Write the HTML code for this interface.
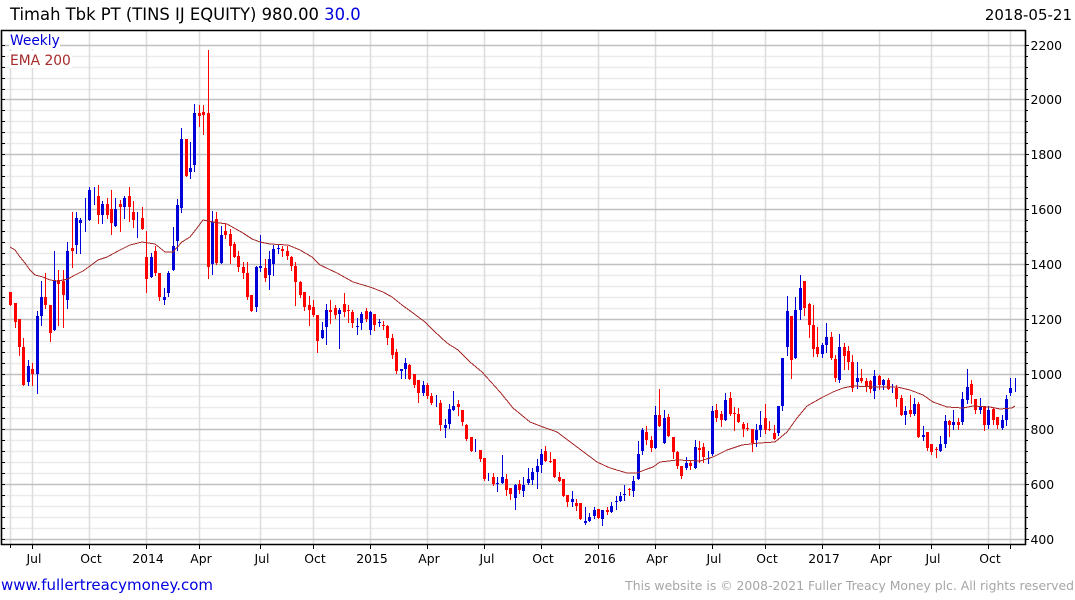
<!DOCTYPE html>
<html><head><meta charset="utf-8"><title>Timah Tbk PT</title>
<style>
html,body{margin:0;padding:0;background:#fff;width:1075px;height:600px;overflow:hidden}
svg{display:block}
text{font-family:"DejaVu Sans","Liberation Sans",sans-serif}
</style></head><body>
<svg width="1075" height="600" viewBox="0 0 1075 600" xmlns="http://www.w3.org/2000/svg">
<rect width="1075" height="600" fill="#fff"/>
<!-- minor horizontal grid -->
<path fill="none" stroke="#ebebeb" stroke-width="1.6" d="M3 56.5H1025M3 67.5H1025M3 78.5H1025M3 89.5H1025M3 110.5H1025M3 121.5H1025M3 132.5H1025M3 143.5H1025M3 165.5H1025M3 176.5H1025M3 187.5H1025M3 198.5H1025M3 220.5H1025M3 231.5H1025M3 242.5H1025M3 253.5H1025M3 275.5H1025M3 286.5H1025M3 297.5H1025M3 308.5H1025M3 330.5H1025M3 341.5H1025M3 352.5H1025M3 363.5H1025M3 385.5H1025M3 396.5H1025M3 407.5H1025M3 418.5H1025M3 440.5H1025M3 451.5H1025M3 462.5H1025M3 473.5H1025M3 495.5H1025M3 506.5H1025M3 517.5H1025M3 528.5H1025"/>
<!-- vertical grid -->
<path fill="none" stroke="#dedede" stroke-width="1.6" d="M10.5 31V544M32.5 31V544M89.5 31V544M146.5 31V544M199.5 31V544M260.5 31V544M313.5 31V544M370.5 31V544M427.5 31V544M484.5 31V544M541.5 31V544M598.5 31V544M655.5 31V544M712.5 31V544M765.5 31V544M822.5 31V544M879.5 31V544M931.5 31V544M988.5 31V544M1010.5 31V544"/>
<!-- major horizontal grid -->
<path fill="none" stroke="#c0c0c0" stroke-width="1.6" d="M3 45.5H1025M3 99.5H1025M3 154.5H1025M3 209.5H1025M3 264.5H1025M3 319.5H1025M3 374.5H1025M3 429.5H1025M3 484.5H1025M3 539.5H1025"/>

<!-- red wicks -->
<path fill="none" stroke="#f00" stroke-width="1" d="M10.5 292V306M15.5 303V328M19.5 319V356M23.5 338V386M32.5 363V386M45.5 273V309M50.5 305V342M58.5 270V326M63.5 270V328M72.5 212V268M98.5 185V224M107.5 198V219M111.5 190V235M120.5 200V232M129.5 187V222M133.5 201V228M142.5 207V230M146.5 231V293M155.5 246V276M159.5 273V301M186.5 139V177M199.5 105V127M203.5 105V135M208.5 50V279M216.5 212V265M225.5 223V239M230.5 229V264M234.5 242V258M238.5 251V272M243.5 262V279M247.5 262V300M251.5 295V312M265.5 259V282M282.5 246V257M287.5 246V260M291.5 256V271M295.5 262V306M300.5 281V298M304.5 292V311M309.5 296V326M313.5 300V317M317.5 315V353M330.5 300V324M335.5 305V319M344.5 293V317M348.5 305V323M352.5 310V328M366.5 308V322M374.5 314V331M383.5 321V330M387.5 325V345M392.5 334V359M396.5 349V374M409.5 364V380M414.5 374V388M418.5 380V403M427.5 383V399M431.5 393V405M440.5 400V431M458.5 400V416M462.5 410V426M466.5 424V441M471.5 437V452M480.5 450V462M484.5 458V481M493.5 473V486M506.5 474V496M510.5 488V500M519.5 480V494M545.5 446V462M550.5 452V463M554.5 459V478M559.5 472V482M563.5 479V497M567.5 495V507M576.5 499V511M580.5 503V520M598.5 509V519M607.5 507V515M629.5 488V496M646.5 426V445M651.5 436V452M659.5 389V427M668.5 414V437M673.5 437V459M677.5 451V469M681.5 466V479M690.5 461V470M699.5 441V463M703.5 443V463M716.5 404V422M721.5 411V427M730.5 392V416M734.5 407V431M738.5 408V423M743.5 422V437M747.5 423V431M752.5 429V452M765.5 404V434M769.5 421V431M774.5 425V440M791.5 316V379M804.5 281V316M809.5 303V338M813.5 305V357M817.5 327V357M831.5 332V360M835.5 355V382M844.5 343V370M848.5 346V370M852.5 355V392M861.5 369V383M866.5 378V392M870.5 380V393M879.5 375V390M888.5 378V390M896.5 385V407M901.5 395V416M910.5 395V417M918.5 402V438M927.5 432V451M931.5 444V455M936.5 447V458M949.5 420V437M958.5 418V430M971.5 380V404M975.5 399V414M984.5 406V431M993.5 407V425M997.5 417V429"/>
<!-- red bodies -->
<path fill="none" stroke="#f00" stroke-width="3" d="M10.5 292V305M15.5 303V322M19.5 319V347M23.5 347V385M32.5 369V374M45.5 297V305M50.5 305V333M58.5 280V284M63.5 281V295M72.5 248V251M98.5 196V215M107.5 204V215M111.5 209V223M120.5 204V207M129.5 196V207M133.5 212V220M142.5 218V229M146.5 257V279M155.5 251V273M159.5 273V297M186.5 139V176M199.5 113V116M203.5 112V115M208.5 113V267M216.5 219V263M225.5 231V235M230.5 234V246M234.5 244V257M238.5 256V267M243.5 267V273M247.5 273V297M251.5 295V311M265.5 268V278M282.5 249V251M287.5 251V256M291.5 257V266M295.5 266V282M300.5 282V295M304.5 292V307M309.5 305V310M313.5 307V315M317.5 315V341M330.5 310V312M335.5 308V315M344.5 304V312M348.5 310V311M352.5 312V323M366.5 311V319M374.5 314V325M383.5 325V326M387.5 326V338M392.5 338V355M396.5 352V371M409.5 365V379M414.5 374V385M418.5 380V393M427.5 385V396M431.5 396V403M440.5 403V425M458.5 404V407M462.5 410V422M466.5 425V439M471.5 437V451M480.5 450V459M484.5 458V479M493.5 477V484M506.5 479V490M510.5 488V494M519.5 484V490M545.5 451V461M550.5 461V462M554.5 459V477M559.5 477V481M563.5 479V496M567.5 495V502M576.5 503V506M580.5 503V519M598.5 509V518M607.5 510V512M629.5 489V490M646.5 432V440M651.5 440V448M659.5 415V426M668.5 417V436M673.5 437V452M677.5 452V466M681.5 466V476M690.5 463V466M699.5 448V450M703.5 447V457M716.5 410V418M721.5 414V420M730.5 398V414M734.5 413V414M738.5 414V422M743.5 424V429M747.5 428V429M752.5 429V443M765.5 418V430M769.5 429V430M774.5 433V439M791.5 316V360M804.5 281V308M809.5 304V325M813.5 325V349M817.5 347V354M831.5 337V358M835.5 359V378M844.5 347V356M848.5 351V362M852.5 362V388M861.5 378V381M866.5 381V386M870.5 381V389M879.5 376V385M888.5 380V389M896.5 388V399M901.5 398V415M910.5 410V414M918.5 404V437M927.5 432V448M931.5 444V452M936.5 449V450M949.5 421V425M958.5 422V425M971.5 384V395M975.5 399V410M984.5 406V425M993.5 409V420M997.5 417V425"/>
<!-- blue wicks -->
<path fill="none" stroke="#0000d8" stroke-width="1" d="M28.5 360V386M37.5 311V394M41.5 281V326M54.5 251V331M67.5 242V309M76.5 212V254M80.5 218V254M85.5 198V232M89.5 187V221M94.5 187V205M102.5 201V224M115.5 198V227M124.5 196V219M137.5 212V238M151.5 253V278M164.5 288V305M168.5 271V297M173.5 227V271M177.5 199V251M181.5 128V213M190.5 142V179M194.5 104V172M212.5 211V275M221.5 226V264M256.5 266V312M260.5 235V272M269.5 251V290M273.5 245V276M278.5 245V254M322.5 322V339M326.5 304V345M339.5 308V349M357.5 318V335M361.5 312V330M370.5 311V335M379.5 319V327M401.5 369V379M405.5 358V379M423.5 381V396M436.5 395V407M445.5 419V438M449.5 404V429M453.5 391V411M475.5 439V452M488.5 473V481M497.5 477V492M502.5 455V484M515.5 484V510M523.5 477V497M528.5 468V485M532.5 468V485M537.5 459V489M541.5 449V473M572.5 491V507M585.5 507V525M589.5 513V522M594.5 507V519M602.5 510V526M611.5 502V513M616.5 496V510M620.5 492V502M624.5 485V501M633.5 476V497M638.5 441V480M642.5 428V455M655.5 406V449M664.5 410V444M686.5 457V470M695.5 440V469M708.5 451V464M712.5 406V456M725.5 393V421M756.5 424V447M760.5 411V437M778.5 406V436M782.5 358V411M787.5 296V356M795.5 297V359M800.5 275V320M822.5 343V358M826.5 323V353M839.5 334V383M857.5 362V389M874.5 370V399M883.5 379V390M892.5 384V393M905.5 406V425M914.5 398V416M923.5 426V441M940.5 436V452M945.5 415V448M953.5 410V430M962.5 392V425M967.5 369V404M980.5 398V414M988.5 406V429M1002.5 415V430M1006.5 395V426M1010.5 378V396M1015.5 378V392"/>
<!-- blue bodies -->
<path fill="none" stroke="#0000d8" stroke-width="3" d="M28.5 366V382M37.5 316V374M41.5 297V316M54.5 281V330M67.5 251V300M76.5 218V245M80.5 220V223M89.5 190V220M102.5 204V215M115.5 209V226M124.5 198V207M151.5 257V277M164.5 297V300M168.5 273V293M173.5 246V270M177.5 205V241M181.5 139V208M190.5 168V172M194.5 113V165M212.5 222V264M221.5 235V263M256.5 267V307M260.5 266V268M269.5 259V275M273.5 249V264M278.5 248V249M322.5 330V338M326.5 310V327M339.5 310V314M357.5 326V327M361.5 314V323M370.5 312V330M379.5 322V323M401.5 369V371M405.5 363V369M423.5 385V393M445.5 425V428M449.5 409V424M453.5 406V410M497.5 483V484M502.5 477V483M515.5 485V498M523.5 485V491M528.5 479V483M532.5 472V480M537.5 466V472M541.5 454V465M572.5 499V502M585.5 521V523M589.5 517V521M594.5 510V516M602.5 510V519M611.5 506V512M616.5 501V502M620.5 496V501M624.5 494V495M633.5 481V491M638.5 454V479M642.5 430V451M655.5 415V448M664.5 418V443M686.5 463V468M695.5 447V468M708.5 458V459M712.5 411V454M725.5 400V420M756.5 430V440M760.5 425V430M778.5 406V433M782.5 358V406M787.5 311V347M795.5 310V358M800.5 288V310M822.5 345V354M826.5 337V345M839.5 347V380M857.5 378V382M874.5 376V391M883.5 380V385M905.5 411V415M914.5 404V414M923.5 435V437M940.5 444V451M945.5 421V444M953.5 422V425M962.5 399V422M967.5 387V400M980.5 407V410M988.5 410V425M1002.5 420V428M1006.5 399V420M1010.5 388V393"/>
<!-- EMA 200 -->
<polyline fill="none" stroke="#a52a2a" stroke-width="1" shape-rendering="crispEdges" points="10,247 15,250 20,257 25,263 30,270 35,275 43,277 50,280 58,281 68,279 75,275 83,271 90,266 98,260 107,257 120,250 130,245 142,242 155,244 165,252 173,252 182,242 190,237 197,228 203,220 213,222 227,224 243,233 252,239 260,242 270,244 288,245 300,250 312,257 320,265 337,273 353,282 370,287 383,292 392,297 402,305 413,313 425,322 434,331 447,343 458,350 470,362 482,372 491,382 500,392 513,408 530,422 543,427 557,432 577,447 597,462 610,468 627,473 637,473 647,469 653,467 660,462 677,460 700,461 713,457 727,450 742,445 760,443 775,442 787,432 797,418 807,406 823,397 833,392 843,388 853,386 877,387 897,387 910,390 923,395 933,402 947,407 963,408 973,406 990,407 1000,409 1012,408 1015,406"/>

<!-- frame -->
<path fill="none" stroke="#000" stroke-width="1.6" d="M1.5 30.5H1025.5V544.5H1.5Z"/>
<!-- ticks -->
<path fill="none" stroke="#000" stroke-width="1" shape-rendering="crispEdges" d="M10.5 545V548M32.5 545V549M89.5 545V549M146.5 545V549M199.5 545V549M260.5 545V549M313.5 545V549M370.5 545V549M427.5 545V549M484.5 545V549M541.5 545V549M598.5 545V549M655.5 545V549M712.5 545V549M765.5 545V549M822.5 545V549M879.5 545V549M931.5 545V549M988.5 545V549M1010.5 545V549"/>
<path fill="none" stroke="#000" stroke-width="1" shape-rendering="crispEdges" d="M1026 45.5H1029M1026 99.5H1029M1026 154.5H1029M1026 209.5H1029M1026 264.5H1029M1026 319.5H1029M1026 374.5H1029M1026 429.5H1029M1026 484.5H1029M1026 539.5H1029M1026 56.5H1028M1026 67.5H1028M1026 78.5H1028M1026 89.5H1028M1026 110.5H1028M1026 121.5H1028M1026 132.5H1028M1026 143.5H1028M1026 165.5H1028M1026 176.5H1028M1026 187.5H1028M1026 198.5H1028M1026 220.5H1028M1026 231.5H1028M1026 242.5H1028M1026 253.5H1028M1026 275.5H1028M1026 286.5H1028M1026 297.5H1028M1026 308.5H1028M1026 330.5H1028M1026 341.5H1028M1026 352.5H1028M1026 363.5H1028M1026 385.5H1028M1026 396.5H1028M1026 407.5H1028M1026 418.5H1028M1026 440.5H1028M1026 451.5H1028M1026 462.5H1028M1026 473.5H1028M1026 495.5H1028M1026 506.5H1028M1026 517.5H1028M1026 528.5H1028"/>
<path fill="none" stroke="#000" stroke-width="1" shape-rendering="crispEdges" d="M2 45.5H5M2 56.5H5M2 67.5H5M2 78.5H5M2 89.5H5M2 99.5H5M2 110.5H5M2 121.5H5M2 132.5H5M2 143.5H5M2 154.5H5M2 165.5H5M2 176.5H5M2 187.5H5M2 198.5H5M2 209.5H5M2 220.5H5M2 231.5H5M2 242.5H5M2 253.5H5M2 264.5H5M2 275.5H5M2 286.5H5M2 297.5H5M2 308.5H5M2 319.5H5M2 330.5H5M2 341.5H5M2 352.5H5M2 363.5H5M2 374.5H5M2 385.5H5M2 396.5H5M2 407.5H5M2 418.5H5M2 429.5H5M2 440.5H5M2 451.5H5M2 462.5H5M2 473.5H5M2 484.5H5M2 495.5H5M2 506.5H5M2 517.5H5M2 528.5H5M2 539.5H5"/>

<!-- legend -->
<rect x="9" y="32" width="51" height="17" fill="#fff"/>
<rect x="9" y="51" width="63" height="17" fill="#fff"/>
<text x="10" y="45" font-size="13.8" fill="#0000d8">Weekly</text>
<text x="10" y="65" font-size="13.8" fill="#a52a2a">EMA 200</text>

<!-- title -->
<text x="10" y="20" font-size="16.4" fill="#000">Timah Tbk PT (TINS IJ EQUITY) 980.00 <tspan fill="#0000e0">30.0</tspan></text>
<text x="1072" y="20" font-size="15" fill="#000" text-anchor="end">2018-05-21</text>

<!-- y labels -->
<g font-size="12.4" fill="#000">
<text x="1030.5" y="50">2200</text><text x="1030.5" y="104">2000</text><text x="1030.5" y="159">1800</text><text x="1030.5" y="214">1600</text><text x="1030.5" y="269">1400</text><text x="1030.5" y="324">1200</text><text x="1030.5" y="379">1000</text><text x="1030.5" y="434">800</text><text x="1030.5" y="489">600</text><text x="1030.5" y="544">400</text>
</g>
<!-- x labels -->
<g font-size="12.4" fill="#000" text-anchor="middle">
<text x="34" y="563">Jul</text><text x="91" y="563">Oct</text><text x="148" y="563">2014</text><text x="201" y="563">Apr</text><text x="262" y="563">Jul</text><text x="315" y="563">Oct</text><text x="372" y="563">2015</text><text x="429" y="563">Apr</text><text x="487" y="563">Jul</text><text x="543" y="563">Oct</text><text x="600" y="563">2016</text><text x="657" y="563">Apr</text><text x="714" y="563">Jul</text><text x="767" y="563">Oct</text><text x="824" y="563">2017</text><text x="881" y="563">Apr</text><text x="933" y="563">Jul</text><text x="990" y="563">Oct</text>
</g>
<!-- footer -->
<text x="1" y="590" font-size="15" fill="#0000e0">www.fullertreacymoney.com</text>
<text x="1074" y="590" font-size="12.4" fill="#a6a6a6" text-anchor="end">This website is © 2008-2021 Fuller Treacy Money plc. All rights reserved</text>
</svg>
</body></html>
